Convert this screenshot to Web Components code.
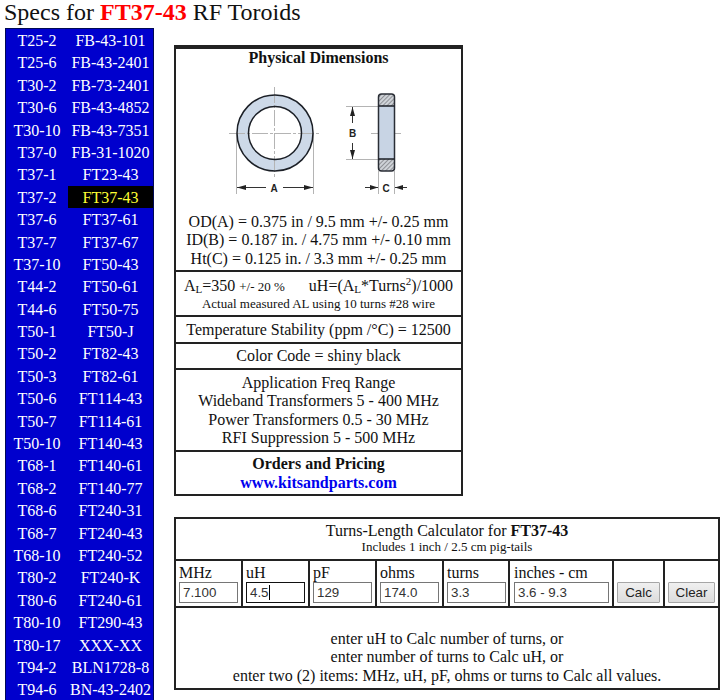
<!DOCTYPE html>
<html><head><meta charset="utf-8"><title>Specs for FT37-43 RF Toroids</title>
<style>
html,body{margin:0;padding:0;background:#fff;overflow:hidden;height:700px}
body{font:16px "Liberation Serif","Times New Roman",serif;color:#111}
</style></head><body>
<spec-page></spec-page>

<template id="t-page"><style>
:host{display:block;width:725px;height:700px;overflow:hidden}
h1{margin:0;padding:0 0 0 4px;height:28px;font:400 24px/24px "Liberation Serif",serif;color:#111;white-space:nowrap}
h1 b{color:#f00;font-weight:700}
.cols{display:flex;align-items:flex-start}
.right{margin:17px 0 0 20px;display:flex;flex-direction:column;gap:21px}
core-list{margin-left:5px}
</style>
<h1>Specs for <b>FT37-43</b> RF Toroids</h1>
<div class="cols"><core-list></core-list><div class="right"><dim-panel></dim-panel><calc-panel></calc-panel></div></div>
</template>

<template id="t-list"><style>
:host{display:block;width:149px;border:1px solid #000a55;border-bottom:0;box-sizing:border-box;background:#0000cd}
.g{display:grid;grid-template-columns:62px 85px;grid-auto-rows:22.4px}
span{color:#fff;font:16px/24.4px "Liberation Serif",serif;text-align:center;white-space:nowrap}
.on{background:#000;color:#ffff33}
</style><div class="g"></div></template>

<template id="t-dim"><style>
:host{display:block;width:289px;box-sizing:border-box;border:2px solid #222;background:#fff;text-align:center;color:#111;font:16px/18.4px "Liberation Serif",serif}
section{box-sizing:border-box;border-top:2px solid #222}
section:first-child{border-top:0}
.phys{height:223px}
.phys h2{margin:0 0 3px;font:700 16px/18px "Liberation Serif",serif;color:#111}
svg{display:block}
.al{height:45px;padding-top:3px}
.al .row{display:flex;justify-content:center;white-space:nowrap;line-height:21px}
.al .row i{font-style:normal;font-size:13px}
.al sub{font-size:11px;vertical-align:-2px;line-height:0}
.al sup{font-size:11px;vertical-align:6px;line-height:0}
.al .gap{width:24px}
.small{font-size:13px;line-height:14px}
.t{height:27px;line-height:25px}
.c{height:26px;line-height:24px}
.app{height:82px;padding-top:4px}
.ord{height:44px;padding-top:2px;font-weight:700;line-height:19px}
a{color:#0000ee;text-decoration:none;display:block}
</style>
<section class="phys"><h2>Physical Dimensions</h2>
<svg width="285" height="143" viewBox="0 0 285 143" role="img" aria-label="Toroid dimensions drawing">
<defs><pattern id="h" width="3" height="3" patternUnits="userSpaceOnUse" patternTransform="rotate(-45)"><rect width="3" height="3" fill="#cfd3d8"/><line x1="0" y1="0.500" x2="3" y2="0.500" stroke="#8f9196" stroke-width="1"/></pattern></defs>
<circle cx="99" cy="63" r="32.200" fill="none" stroke="#cdd9e8" stroke-width="11.500"/>
<g stroke="#b4b4b4" stroke-width="1" fill="none">
<path d="M98.500 17V109M53 63.500H144" stroke-dasharray="16 2 3 2"/>
<path d="M60.500 63V124M137.500 63V124"/>
<path d="M170 36.500H202M170 89.500H202"/>
<path d="M195 63.500H225" stroke-dasharray="16 2 3 2"/>
<path d="M202.500 101V124M218.500 101V124"/>
</g>
<circle cx="99" cy="63" r="38" fill="none" stroke="#1b1f26" stroke-width="1.500"/>
<circle cx="99" cy="63" r="26.500" fill="none" stroke="#1b1f26" stroke-width="1.500"/>
<rect x="202.500" y="36" width="16" height="53" fill="#c8d4e4"/>
<path d="M202.500 27q0-3 3-3h10q3 0 3 3V36H202.500Z" fill="url(#h)"/>
<path d="M202.500 89H218.500V98q0 3-3 3h-10q-3 0-3-3Z" fill="url(#h)"/>
<path d="M202.500 27q0-3 3-3h10q3 0 3 3V98q0 3-3 3h-10q-3 0-3-3Z" fill="none" stroke="#2a2e36" stroke-width="1.500"/>
<path d="M202.500 36H218.500M202.500 89H218.500" stroke="#1b1f26" stroke-width="1.500"/>
<g stroke="#333" stroke-width="1" fill="none">
<path d="M61 117.500H90M107 117.500H137"/>
<path d="M176.500 37V53M176.500 73V89M189 117.500H202M219 117.500H231"/>
</g>
<g fill="#222">
<path d="M61 117.500l9-2.500v5ZM137 117.500l-9-2.500v5Z"/>
<path d="M176.500 37l-2.500 9h5ZM176.500 89l-2.500-9h5Z"/>
<path d="M202 117.500l-8-2.500v5ZM219 117.500l8-2.500v5Z"/>
</g>
<g font-family="Liberation Sans,Arial,sans-serif" font-weight="700" font-size="10" fill="#222" text-anchor="middle">
<text x="98" y="121.500">A</text><text x="176.500" y="66.500">B</text><text x="210" y="121.500">C</text>
</g></svg>
<div class="lines">OD(A) = 0.375 in / 9.5 mm +/- 0.25 mm<br>ID(B) = 0.187 in. / 4.75 mm +/- 0.10 mm<br>Ht(C) = 0.125 in. / 3.3 mm +/- 0.25 mm</div>
</section>
<section class="al"><div class="row"><span>A<sub>L</sub>=350 <i>+/- 20 %</i></span><span class="gap"></span><span>uH=(A<sub>L</sub>*Turns<sup>2</sup>)/1000</span></div>
<div class="small">Actual measured AL using 10 turns #28 wire</div></section>
<section class="t">Temperature Stability (ppm /°C) = 12500</section>
<section class="c">Color Code = shiny black</section>
<section class="app">Application Freq Range<br>Wideband Transformers 5 - 400 MHz<br>Power Transformers 0.5 - 30 MHz<br>RFI Suppression 5 - 500 MHz</section>
<section class="ord">Orders and Pricing<a href="#">www.kitsandparts.com</a></section>
</template>

<template id="t-field"><style>
:host{display:block;box-sizing:border-box;padding:4px 3px 0 3px;font:16px/16px "Liberation Serif",serif;color:#111;white-space:nowrap}
.box{box-sizing:border-box;height:21px;margin-top:1px;border:1px solid #767676;background:#fff;font:13.33px/19px "Liberation Sans",Arial,sans-serif;padding-left:3px;color:#333;display:flex;align-items:center;white-space:pre}
:host([focused]) .box{border-color:#111}
.caret{width:1px;height:15px;background:#000;display:none}
:host([focused]) .caret{display:block}
</style><slot name="label"></slot><div class="box" role="textbox"><slot></slot><span class="caret"></span></div></template>

<template id="t-btn"><style>
:host{display:flex;align-items:flex-end;justify-content:center;padding-bottom:3px;box-sizing:border-box}
button{box-sizing:border-box;height:21px;padding:0;border:1px solid #a6a6a6;background:linear-gradient(#f0f0f0,#dcdcdc);border-radius:1px;font:13.33px "Liberation Sans",Arial,sans-serif;color:#222;margin:0}
</style><button><slot></slot></button></template>

<template id="t-calc"><style>
:host{display:block;width:546px;box-sizing:border-box;border:2px solid #222;background:#fff;text-align:center;color:#111;font:16px/18.4px "Liberation Serif",serif}
.head{height:42px;padding-top:3px;box-sizing:border-box;border-bottom:2px solid #222}
.head small{display:block;font-size:13px;line-height:14px}
.row{display:grid;grid-template-columns:65px 65px 65px 65px 64px 102px 49px 1fr;gap:2px;background:#222;border-bottom:2px solid #222;height:47px;box-sizing:border-box;text-align:left}
.row>*{background:#fff}
.note{height:80px;box-sizing:border-box;padding-top:22px;line-height:18.4px}
</style>
<div class="head">Turns-Length Calculator for <b>FT37-43</b><small>Includes 1 inch / 2.5 cm pig-tails</small></div>
<div class="row">
<tk-field><span slot="label">MHz</span>7.100</tk-field>
<tk-field focused><span slot="label">uH</span>4.5</tk-field>
<tk-field><span slot="label">pF</span>129</tk-field>
<tk-field><span slot="label">ohms</span>174.0</tk-field>
<tk-field style="padding-right:2px"><span slot="label">turns</span>3.3</tk-field>
<tk-field style="padding-left:4px"><span slot="label">inches - cm</span>3.6 - 9.3</tk-field>
<tk-btn style="--bw:43px">Calc</tk-btn>
<tk-btn style="--bw:47px">Clear</tk-btn>
</div>
<div class="note">enter uH to Calc number of turns, or<br>enter number of turns to Calc uH, or<br>enter two (2) items: MHz, uH, pF, ohms or turns to Calc all values.</div>
</template>

<script>
function mk(name,tid,init){customElements.define(name,class extends HTMLElement{constructor(){super();const r=this.attachShadow({mode:'open'});r.appendChild(document.getElementById(tid).content.cloneNode(true));if(init)init.call(this,r);}});}
const rows=`T25-2 FB-43-101|T25-6 FB-43-2401|T30-2 FB-73-2401|T30-6 FB-43-4852|T30-10 FB-43-7351|T37-0 FB-31-1020|T37-1 FT23-43|T37-2 FT37-43|T37-6 FT37-61|T37-7 FT37-67|T37-10 FT50-43|T44-2 FT50-61|T44-6 FT50-75|T50-1 FT50-J|T50-2 FT82-43|T50-3 FT82-61|T50-6 FT114-43|T50-7 FT114-61|T50-10 FT140-43|T68-1 FT140-61|T68-2 FT140-77|T68-6 FT240-31|T68-7 FT240-43|T68-10 FT240-52|T80-2 FT240-K|T80-6 FT240-61|T80-10 FT290-43|T80-17 XXX-XX|T94-2 BLN1728-8|T94-6 BN-43-2402`.split('|');
mk('core-list','t-list',function(r){const g=r.querySelector('.g');rows.forEach(x=>{x.split(' ').forEach(t=>{const s=document.createElement('span');s.textContent=t;if(t==='FT37-43')s.className='on';g.appendChild(s);});});});
mk('dim-panel','t-dim');
mk('tk-field','t-field');
mk('tk-btn','t-btn',function(r){r.querySelector('button').style.width=this.style.getPropertyValue('--bw')||'';});
mk('calc-panel','t-calc');
mk('spec-page','t-page');
</script>
</body></html>
